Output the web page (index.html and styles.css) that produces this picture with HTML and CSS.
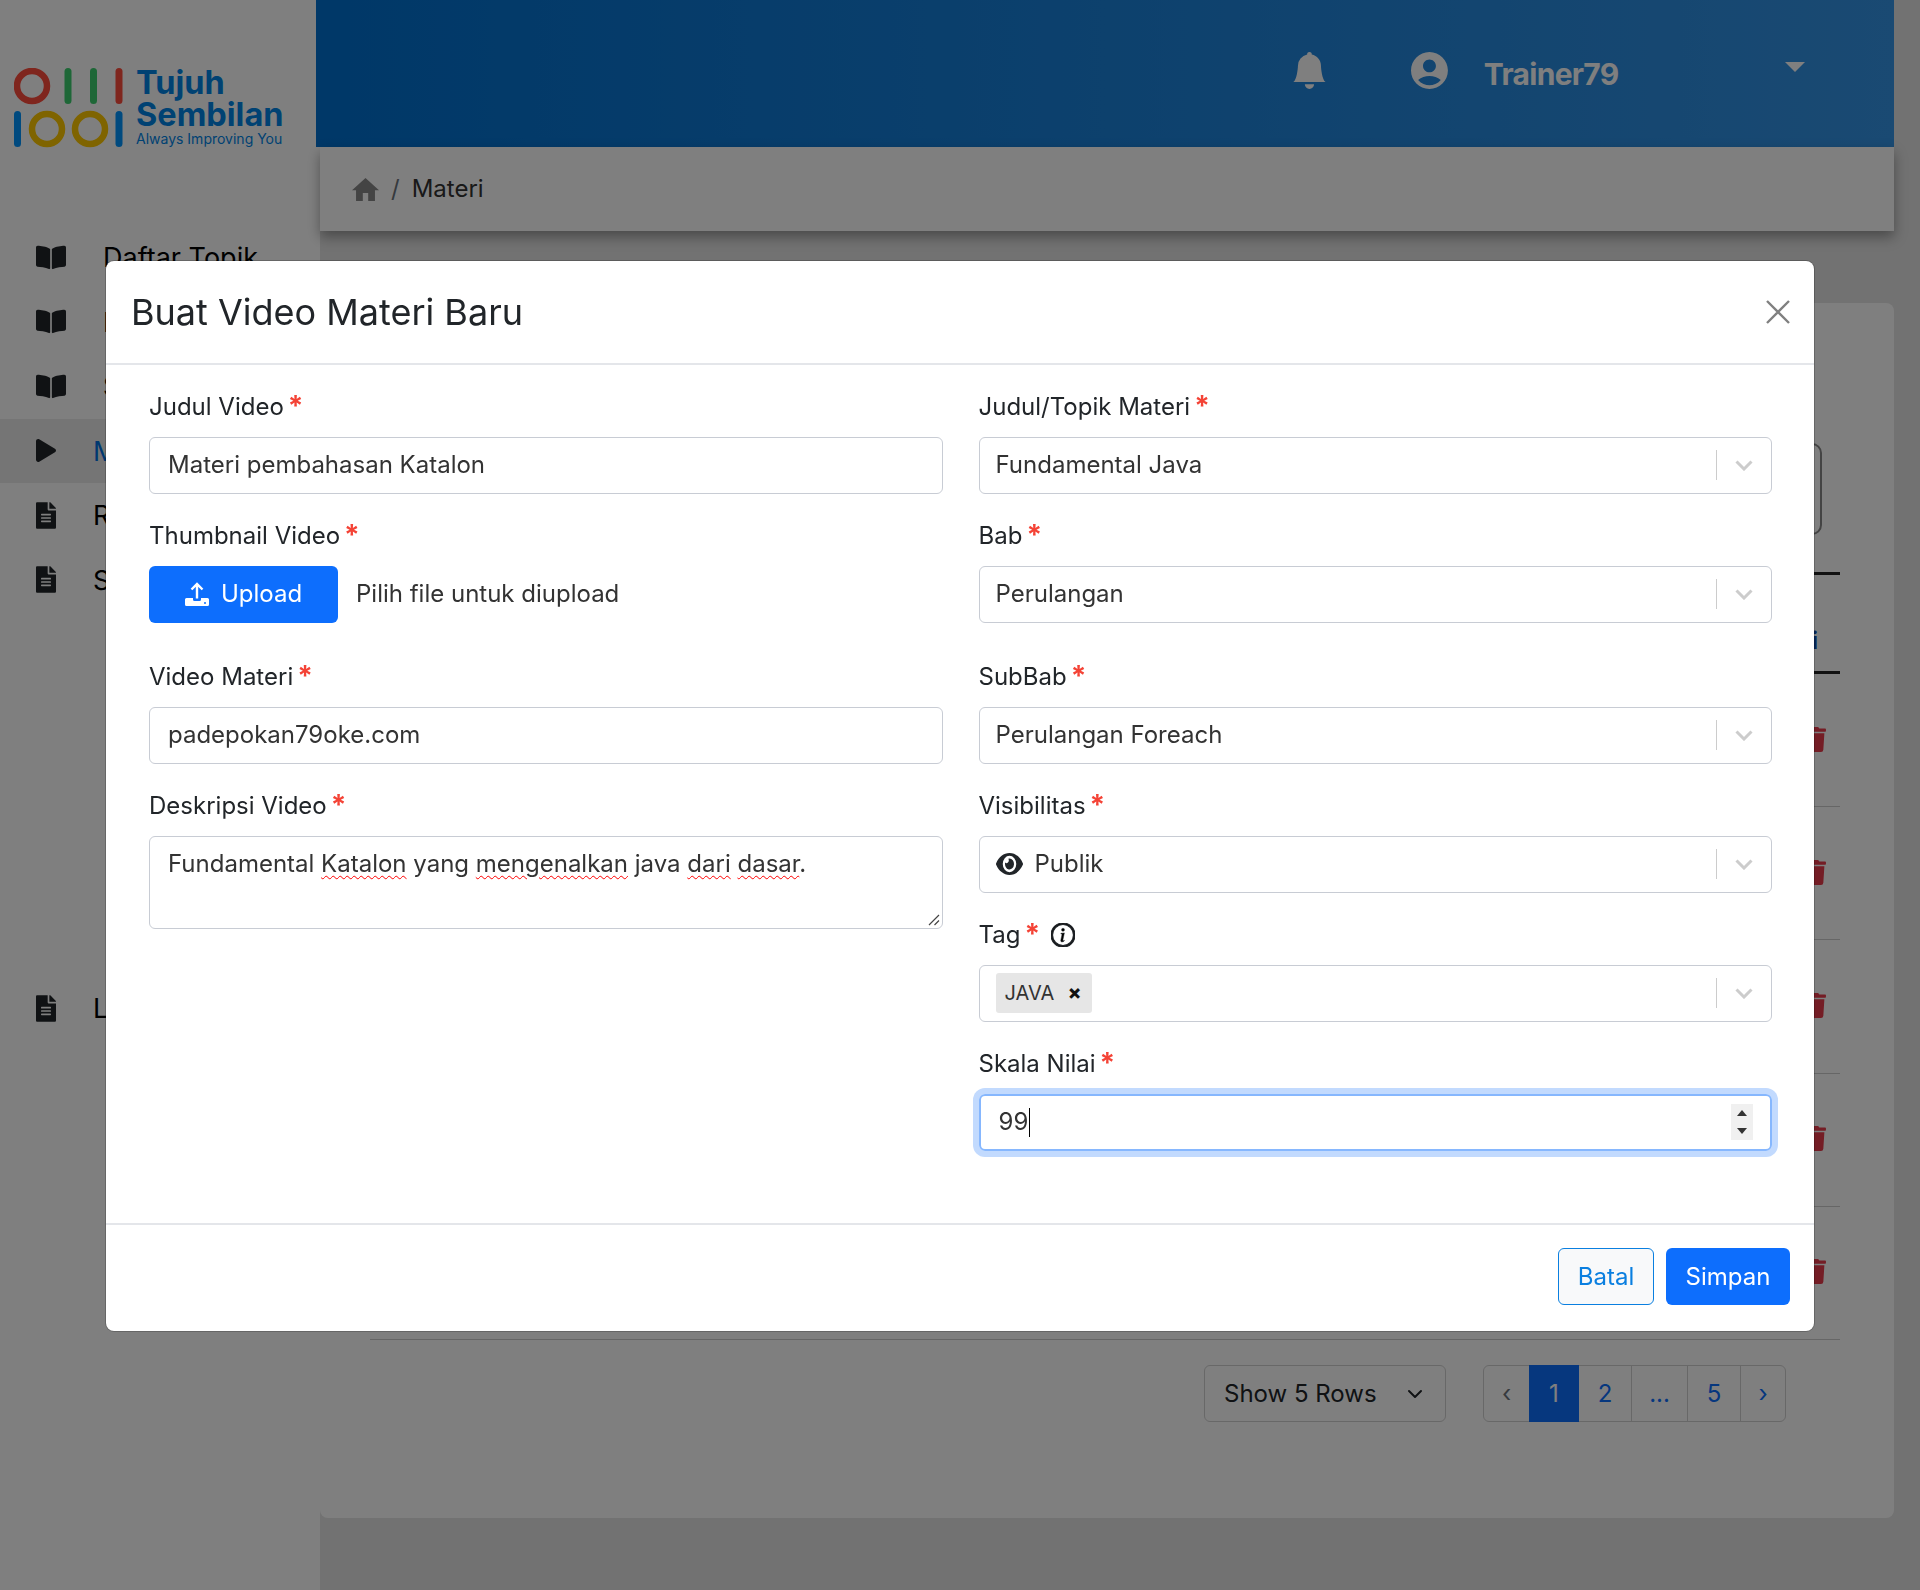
FILE: index.html
```html
<!DOCTYPE html>
<html lang="id">
<head>
<meta charset="utf-8">
<title>Materi</title>
<link rel="stylesheet" href="styles.css">
</head>
<body>
<div class="page">
  <aside class="sidebar">
    <div class="logo">
      <svg class="logo-mark" viewBox="0 0 116 82" aria-hidden="true">
        <circle cx="18" cy="18" r="15" fill="none" stroke="#ff4c3c" stroke-width="6.5"/>
        <rect x="50.5" y="0" width="7" height="36" rx="3.5" fill="#3ccf6e"/>
        <rect x="76" y="0" width="7" height="36" rx="3.5" fill="#3ccf6e"/>
        <rect x="101.500" y="0" width="7" height="36" rx="3.5" fill="#ff4c3c"/>
        <rect x="0" y="43" width="7" height="36" rx="3.5" fill="#0094ff"/>
        <circle cx="33" cy="61" r="15" fill="none" stroke="#ffc800" stroke-width="6.5"/>
        <circle cx="76" cy="61" r="15" fill="none" stroke="#ffc800" stroke-width="6.5"/>
        <rect x="101.500" y="43" width="7" height="36" rx="3.5" fill="#0094ff"/>
      </svg>
      <div class="logo-text">
        <div class="logo-name">Tujuh</div>
        <div class="logo-name">Sembilan</div>
        <div class="logo-tag">Always Improving You</div>
      </div>
    </div>
    <nav class="nav">
      <a class="nav-item"><svg class="ico-book" viewBox="0 0 576 512"><use href="#i-book"/></svg><span>Daftar Topik</span></a>
      <a class="nav-item"><svg class="ico-book" viewBox="0 0 576 512"><use href="#i-book"/></svg><span>Bab</span></a>
      <a class="nav-item"><svg class="ico-book" viewBox="0 0 576 512"><use href="#i-book"/></svg><span>SubBab</span></a>
      <a class="nav-item active"><svg class="ico-play" viewBox="0 0 448 512"><path d="M424.4 214.7L72.4 6.6C43.8-10.3 0 6.1 0 47.9V464c0 37.5 40.7 60.1 72.4 41.3l352-208c31.4-18.5 31.500-64.1 0-82.6z"/></svg><span>Materi</span></a>
      <a class="nav-item"><svg class="ico-file" viewBox="0 0 384 512"><use href="#i-file"/></svg><span>Rapor</span></a>
      <a class="nav-item"><svg class="ico-file" viewBox="0 0 384 512"><use href="#i-file"/></svg><span>Soal</span></a>
      <a class="nav-item nav-last"><svg class="ico-file" viewBox="0 0 384 512"><use href="#i-file"/></svg><span>Laporan</span></a>
    </nav>
  </aside>

  <div class="main">
    <header class="topbar">
      <svg class="ico-bell" viewBox="0 0 16 16"><path d="M8 16a2 2 0 0 0 2-2H6a2 2 0 0 0 2 2zm.995-14.901a1 1 0 1 0-1.99 0A5.002 5.002 0 0 0 3 6c0 1.098-.5 6-2 7h14c-1.500-1-2-5.902-2-7 0-2.420-1.720-4.440-4.005-4.901z"/></svg>
      <svg class="ico-user" viewBox="2 2 20 20"><path d="M12 2C6.480 2 2 6.480 2 12s4.480 10 10 10 10-4.480 10-10S17.520 2 12 2zm0 4c1.930 0 3.500 1.570 3.500 3.500S13.930 13 12 13s-3.500-1.570-3.500-3.500S10.070 6 12 6zm0 14c-2.030 0-4.430-.820-6.140-2.880C7.550 15.800 9.680 15 12 15s4.450.800 6.140 2.120C16.430 19.180 14.030 20 12 20z"/></svg>
      <span class="user-name">Trainer79</span>
      <span class="user-caret"></span>
    </header>
    <div class="crumbs">
      <svg class="ico-home" viewBox="2 3 20 17" preserveAspectRatio="none"><path d="M10 20v-6h4v6h5v-8h3L12 3 2 12h3v8z"/></svg>
      <span class="crumb-sep">/</span>
      <span class="crumb-text">Materi</span>
    </div>
    <section class="card">
      <div class="filter-box"></div>
      <div class="table-head"><span class="head-cell">Aksi</span></div>
      <div class="table-row"><svg class="ico-trash" viewBox="0 0 448 512"><use href="#i-trash"/></svg></div>
      <div class="table-row"><svg class="ico-trash" viewBox="0 0 448 512"><use href="#i-trash"/></svg></div>
      <div class="table-row"><svg class="ico-trash" viewBox="0 0 448 512"><use href="#i-trash"/></svg></div>
      <div class="table-row"><svg class="ico-trash" viewBox="0 0 448 512"><use href="#i-trash"/></svg></div>
      <div class="table-row"><svg class="ico-trash" viewBox="0 0 448 512"><use href="#i-trash"/></svg></div>
      <div class="table-foot">
        <div class="rows-select"><span>Show 5 Rows</span>
          <svg class="rows-chevron" viewBox="0 0 16 16"><path d="M2 5l6 6 6-6" fill="none" stroke="#212529" stroke-width="2" stroke-linecap="round" stroke-linejoin="round"/></svg>
        </div>
        <div class="pager">
          <span class="page-link page-prev">‹</span>
          <span class="page-link page-cur">1</span>
          <span class="page-link page-two">2</span>
          <span class="page-link page-dots">...</span>
          <span class="page-link page-five">5</span>
          <span class="page-link page-next">›</span>
        </div>
      </div>
    </section>
  </div>
</div>

<div class="backdrop"></div>

<div class="modal">
  <div class="modal-header">
    <h1 class="modal-title">Buat Video Materi Baru</h1>
    <svg class="modal-close" viewBox="0 0 24 24"><path d="M1 1l22 22M23 1L1 23" stroke="#808080" stroke-width="2.400" fill="none"/></svg>
  </div>
  <div class="modal-body">
    <div class="col">
      <div class="field">
        <div class="label"><span>Judul Video</span><b class="req">*</b></div>
        <div class="input"><span>Materi pembahasan Katalon</span></div>
      </div>
      <div class="field field-wide">
        <div class="label"><span>Thumbnail Video</span><b class="req">*</b></div>
        <div class="upload-row">
          <button class="btn btn-primary btn-upload" type="button">
            <svg class="ico-upload" viewBox="0 0 24 24"><path d="M12 16.500V2.500M6.500 7.500L12 2l5.500 5.500" fill="none" stroke="#fff" stroke-width="2.400"/><path fill-rule="evenodd" d="M1.500 16H8v1.500a1.500 1.500 0 0 0 1.500 1.500h5a1.500 1.500 0 0 0 1.500-1.500V16h6.500a1.500 1.500 0 0 1 1.500 1.500v5a1.500 1.500 0 0 1-1.500 1.500h-21A1.500 1.500 0 0 1 0 22.500v-5A1.500 1.500 0 0 1 1.500 16zM20 20a1 1 0 1 0 0 2 1 1 0 0 0 0-2z" fill="#fff"/></svg>
            <span>Upload</span>
          </button>
          <span class="upload-hint">Pilih file untuk diupload</span>
        </div>
      </div>
      <div class="field">
        <div class="label"><span>Video Materi</span><b class="req">*</b></div>
        <div class="input"><span>padepokan79oke.com</span></div>
      </div>
      <div class="field">
        <div class="label"><span>Deskripsi Video</span><b class="req">*</b></div>
        <div class="input textarea"><span class="plain">Fundamental </span><span class="typo">Katalon</span><span class="plain"> yang </span><span class="typo">mengenalkan</span><span class="plain"> java </span><span class="typo">dari</span><span class="plain"> </span><span class="typo">dasar</span><span class="plain">.</span><svg class="grip" viewBox="0 0 12 12"><path d="M11 1L1 11M11 6.500L6.500 11" stroke="#444" stroke-width="1.200" fill="none"/></svg></div>
      </div>
    </div>
    <div class="col">
      <div class="field">
        <div class="label"><span>Judul/Topik Materi</span><b class="req">*</b></div>
        <div class="select"><span class="select-value">Fundamental Java</span><span class="select-sep"></span><svg class="select-arrow" viewBox="0 0 18 11"><use href="#i-chev"/></svg></div>
      </div>
      <div class="field field-wide">
        <div class="label"><span>Bab</span><b class="req">*</b></div>
        <div class="select"><span class="select-value">Perulangan</span><span class="select-sep"></span><svg class="select-arrow" viewBox="0 0 18 11"><use href="#i-chev"/></svg></div>
      </div>
      <div class="field">
        <div class="label"><span>SubBab</span><b class="req">*</b></div>
        <div class="select"><span class="select-value">Perulangan Foreach</span><span class="select-sep"></span><svg class="select-arrow" viewBox="0 0 18 11"><use href="#i-chev"/></svg></div>
      </div>
      <div class="field">
        <div class="label"><span>Visibilitas</span><b class="req">*</b></div>
        <div class="select"><svg class="ico-eye" viewBox="0 64 576 384" preserveAspectRatio="none"><path d="M572.520 241.400C518.290 135.590 410.930 64 288 64S57.680 135.640 3.480 241.410a32.350 32.350 0 0 0 0 29.190C57.710 376.410 165.070 448 288 448s230.320-71.640 284.520-177.410a32.350 32.350 0 0 0 0-29.190zM288 400a144 144 0 1 1 144-144 143.930 143.930 0 0 1-144 144zm0-240a95.310 95.310 0 0 0-25.310 3.790 47.850 47.850 0 0 1-66.900 66.900A95.780 95.780 0 1 0 288 160z"/></svg><span class="select-value">Publik</span><span class="select-sep"></span><svg class="select-arrow" viewBox="0 0 18 11"><use href="#i-chev"/></svg></div>
      </div>
      <div class="field">
        <div class="label"><span>Tag</span><b class="req">*</b>
          <svg class="ico-info" viewBox="0 0 16 16"><path d="M8 15A7 7 0 1 1 8 1a7 7 0 0 1 0 14zm0 1A8 8 0 1 0 8 0a8 8 0 0 0 0 16z" stroke="#212529" stroke-width=".8"/><path stroke="#212529" stroke-width=".3" d="m8.930 6.588-2.290.287-.082.380.450.083c.294.070.352.176.288.469l-.738 3.468c-.194.897.105 1.319.808 1.319.545 0 1.178-.252 1.465-.598l.088-.420c-.2.176-.492.246-.686.246-.275 0-.375-.193-.304-.533L8.930 6.588zM9 4.500a1 1 0 1 1-2 0 1 1 0 0 1 2 0z"/></svg>
        </div>
        <div class="select"><span class="chip"><span class="chip-text">JAVA</span><span class="chip-x">×</span></span><span class="select-value"></span><span class="select-sep"></span><svg class="select-arrow" viewBox="0 0 18 11"><use href="#i-chev"/></svg></div>
      </div>
      <div class="field field-last">
        <div class="label"><span>Skala Nilai</span><b class="req">*</b></div>
        <div class="input input-focus"><span>99</span><span class="text-caret"></span>
          <span class="spin"><svg viewBox="0 0 10 6"><path d="M5 0l5 6H0z"/></svg><svg viewBox="0 0 10 6"><path d="M0 0h10L5 6z"/></svg></span>
        </div>
      </div>
    </div>
  </div>
  <div class="modal-footer">
    <button class="btn btn-light" type="button">Batal</button>
    <button class="btn btn-primary btn-save" type="button">Simpan</button>
  </div>
</div>

<svg class="sprite" aria-hidden="true">
  <defs>
    <path id="i-book" d="M542.220 32.050c-54.800 3.110-163.720 14.430-230.960 55.590-4.640 2.840-7.270 7.890-7.270 13.170v363.870c0 11.550 12.630 18.850 23.280 13.490 69.180-34.820 169.230-44.320 218.700-46.920 16.890-.890 30.020-14.430 30.020-30.660V62.750c.010-17.710-15.350-31.740-33.770-30.700zM264.730 87.640C197.500 46.480 88.580 35.170 33.780 32.050 15.360 31.010 0 45.040 0 62.750V400.600c0 16.240 13.130 29.780 30.020 30.660 49.490 2.600 149.590 12.110 218.770 46.950 10.620 5.350 23.210-1.940 23.210-13.460V100.630c0-5.290-2.620-10.140-7.270-12.990z"/>
    <path id="i-file" d="M224 136V0H24C10.700 0 0 10.700 0 24v464c0 13.300 10.700 24 24 24h336c13.300 0 24-10.700 24-24V160H248c-13.200 0-24-10.800-24-24zm64 236c0 6.600-5.400 12-12 12H108c-6.600 0-12-5.400-12-12v-8c0-6.600 5.400-12 12-12h168c6.600 0 12 5.400 12 12v8zm0-64c0 6.600-5.400 12-12 12H108c-6.600 0-12-5.400-12-12v-8c0-6.600 5.400-12 12-12h168c6.600 0 12 5.400 12 12v8zm0-72v8c0 6.600-5.400 12-12 12H108c-6.600 0-12-5.400-12-12v-8c0-6.600 5.400-12 12-12h168c6.600 0 12 5.400 12 12zm96-114.100v6.100H256V0h6.100c6.400 0 12.500 2.500 17 7l97.900 98c4.500 4.500 7 10.600 7 16.900z"/>
    <path id="i-trash" d="M432 32H312l-9.400-18.700A24 24 0 0 0 281.100 0H166.800a23.720 23.720 0 0 0-21.400 13.300L136 32H16A16 16 0 0 0 0 48v32a16 16 0 0 0 16 16h416a16 16 0 0 0 16-16V48a16 16 0 0 0-16-16zM53.200 467a48 48 0 0 0 47.900 45h245.800a48 48 0 0 0 47.900-45L416 128H32z"/>
    <path id="i-chev" d="M1.500 1.500L9 9l7.500-7.500" fill="none" stroke="#ccc" stroke-width="3"/>
  </defs>
</svg>
</body>
</html>
```
FILE: styles.css
```css
* { box-sizing: border-box; }
html, body { margin: 0; padding: 0; }
body {
  height: 1590px;
  overflow: hidden;
  background: #e4e4e4;
  font-family: Inter, "Noto Sans", sans-serif;
  font-size: 24px;
  line-height: 36px;
  color: #212529;
}
.sprite { position: absolute; width: 0; height: 0; }
.page { display: flex; height: 1590px; }

/* sidebar */
.sidebar { width: 320px; flex: none; background: #fff; }
.logo { display: flex; padding: 66px 0 0 14px; height: 225px; gap: 6px; }
.logo-mark { width: 116px; height: 82px; flex: none; margin-top: 2px; }
.logo-text { padding-top: 1px; }
.logo-name { font-size: 32.5px; line-height: 32px; font-weight: 700; color: #0084e6; }
.logo-tag { font-size: 14px; line-height: 18px; margin-top: -1px; color: #0084e6; white-space: nowrap; }
.nav { display: flex; flex-direction: column; }
.nav-item { display: flex; align-items: center; height: 64.5px; padding-left: 36px; color: #000; font-size: 27px; white-space: nowrap; }
.nav-item span { margin-top: 2px; }
.nav-item svg { flex: none; margin-right: 37px; fill: #212529; }
.nav-item.active { background: #ebebeb; color: #0070e0; }
.nav-last { margin-top: 364px; }
.ico-book { width: 30px; height: 27px; }
.ico-play { width: 20px; height: 23px; }
.ico-file { width: 20px; height: 27px; }

/* top */
.main { width: 1574px; flex: none; display: flex; flex-direction: column; }
.topbar {
  height: 147px;
  margin-left: -4px;
  display: flex;
  align-items: center;
  padding: 0 89px 0 977px;
  background: linear-gradient(90deg, #0070d0, #3494e6);
}
.ico-bell { width: 37px; height: 37px; fill: #fff; margin: -7px 0 0 -2px; }
.ico-user { width: 37px; height: 37px; fill: #fff; margin: -7px 0 0 83px; }
.user-name { margin-left: 36px; font-size: 30px; font-weight: 700; letter-spacing: -.7px; color: #fff; width: 302px; }
.user-caret { width: 0; height: 0; border: solid transparent; border-width: 10px 10px 0; border-top-color: #fff; margin-top: -14px; }
.crumbs {
  height: 84px;
  display: flex;
  align-items: center;
  padding-left: 32px;
  background: #fff;
  box-shadow: 0 6px 12px rgba(0,0,0,.35);
  position: relative;
}
.ico-home { width: 27px; height: 23px; fill: #888; margin-right: 12px; }
.crumb-sep { color: #6c757d; margin-right: 12px; }
.crumb-text { color: #333; }

/* card behind the dialog */
.card { margin-top: 72px; height: 1215px; background: #fff; border-radius: 8px; padding: 140px 54px 0 50px; }
.filter-box { width: 1452px; height: 92px; border: 2px solid #888; border-radius: 10px; }
.table-head { margin-top: 37px; height: 102px; border-top: 3px solid #222; border-bottom: 3px solid #222; display: flex; justify-content: flex-end; align-items: flex-end; padding: 0 22px 12px 0; }
.head-cell { color: #0a4bb0; font-weight: 700; }
.table-row { height: 133.2px; border-bottom: 1px solid #ccc; display: flex; justify-content: flex-end; align-items: center; padding: 0 14px 2px 0; }
.ico-trash { width: 22px; height: 25px; fill: #e83a4a; }
.table-foot { display: flex; justify-content: flex-end; gap: 37px; padding: 25px 54px 0 0; }
.rows-select { width: 242px; height: 57px; border: 1px solid #d0d0d0; border-radius: 6px; display: flex; align-items: center; justify-content: space-between; padding: 2px 22px 0 19px; }
.rows-chevron { width: 16px; height: 16px; }
.pager { display: flex; height: 57px; border: 1px solid #d0d0d0; border-radius: 6px; color: #0d6efd; }
.page-link { display: flex; align-items: center; justify-content: center; border-left: 1px solid #d0d0d0; padding-top: 2px; }
.page-prev { width: 45px; border-left: 0; color: #6c757d; }
.page-cur { width: 50px; background: #0d6efd; color: #fff; border-left: 0; margin: -1px 0; }
.page-two { width: 52px; border-left: 0; }
.page-dots { width: 56px; }
.page-five { width: 53px; }
.page-next { width: 45px; }

/* overlay + dialog */
.backdrop { position: fixed; inset: 0; background: rgba(0,0,0,.5); }
.modal {
  position: fixed;
  left: 106px;
  top: 261px;
  width: 1708px;
  height: 1070px;
  background: #fff;
  border-radius: 8px;
  display: flex;
  flex-direction: column;
  box-shadow: 0 0 0 1px rgba(0,0,0,.2);
}
.modal-header { height: 104px; flex: none; border-bottom: 2px solid #e4e6ea; display: flex; align-items: center; justify-content: space-between; padding: 0 24px 0 25px; }
.modal-title { margin: 0; font-size: 36px; font-weight: 400; line-height: 54px; }
.modal-close { width: 24px; height: 24px; }
.modal-body { flex: 1; display: flex; gap: 36px; padding: 24px 42px 0 43px; }
.col { flex: 1; min-width: 0; }
.field { margin-bottom: 24px; }
.field-wide { margin-bottom: 36px; }
.field-last { margin-bottom: 0; }
.label { height: 36px; margin-bottom: 12px; display: flex; align-items: center; gap: 4px; white-space: pre; }
.req { color: #f44336; font-weight: 700; font-size: 28px; line-height: 30px; margin: -2px 0 0; }
.ico-info { width: 24px; height: 24px; margin-left: 7px; }
.input { position: relative; height: 57px; border: 1px solid #c8ccd4; border-radius: 6px; padding: 0 18px 1px; display: flex; align-items: center; color: #333; white-space: pre; }
.textarea { height: 93px; display: block; padding-top: 9px; }
.typo { text-decoration: underline wavy #f00 1.2px; text-underline-offset: 3px; }
.grip { position: absolute; right: 2px; bottom: 2px; width: 12px; height: 12px; }
.input-focus { border: 2px solid #86b7fe; box-shadow: 0 0 0 6px #c2dafe; padding-left: 18px; }
.text-caret { width: 1px; height: 29px; background: #000; margin-left: 1px; }
.spin { position: absolute; right: 17px; top: 8px; width: 22px; height: 36px; background: #f0f0f0; display: flex; flex-direction: column; align-items: center; justify-content: space-around; }
.spin svg { width: 10px; height: 6px; fill: #333; }
.upload-row { display: flex; align-items: center; gap: 18px; height: 57px; }
.btn { height: 57px; border-radius: 6px; font: inherit; border: 0; padding: 0 0 1px; display: inline-flex; align-items: center; justify-content: center; }
.btn-primary { background: #0d6efd; color: #fff; }
.btn-upload { width: 189px; gap: 12px; }
.ico-upload { width: 24px; height: 24px; }
.upload-hint { color: #333; margin-top: -1px; }
.select { height: 57px; border: 1px solid #c8ccd4; border-radius: 6px; display: flex; align-items: center; padding: 0 18px 1px 16px; color: #333; }
.select-value { flex: 1; white-space: pre; }
.select-sep { width: 1px; height: 30px; background: #ccc; margin-right: 18px; }
.select-arrow { width: 18px; height: 11px; }
.ico-eye { width: 27px; height: 22px; fill: #212529; margin-right: 12px; }
.chip { height: 40px; width: 96px; background: #e6e6e6; border-radius: 3px; display: flex; align-items: center; justify-content: space-between; padding: 0 10px 0 9px; font-size: 20px; }
.chip-x { font-weight: 800; color: #111; margin-top: -2px; }
.modal-footer { height: 108px; flex: none; border-top: 2px solid #e4e6ea; display: flex; justify-content: flex-end; align-items: flex-start; gap: 12px; padding: 23px 24px 0 0; }
.btn-light { width: 96px; background: #f8f9fa; color: #0a7fe0; border: 1px solid #0a7fe0; padding: 0; }
.btn-save { width: 124px; padding: 0; }
```
